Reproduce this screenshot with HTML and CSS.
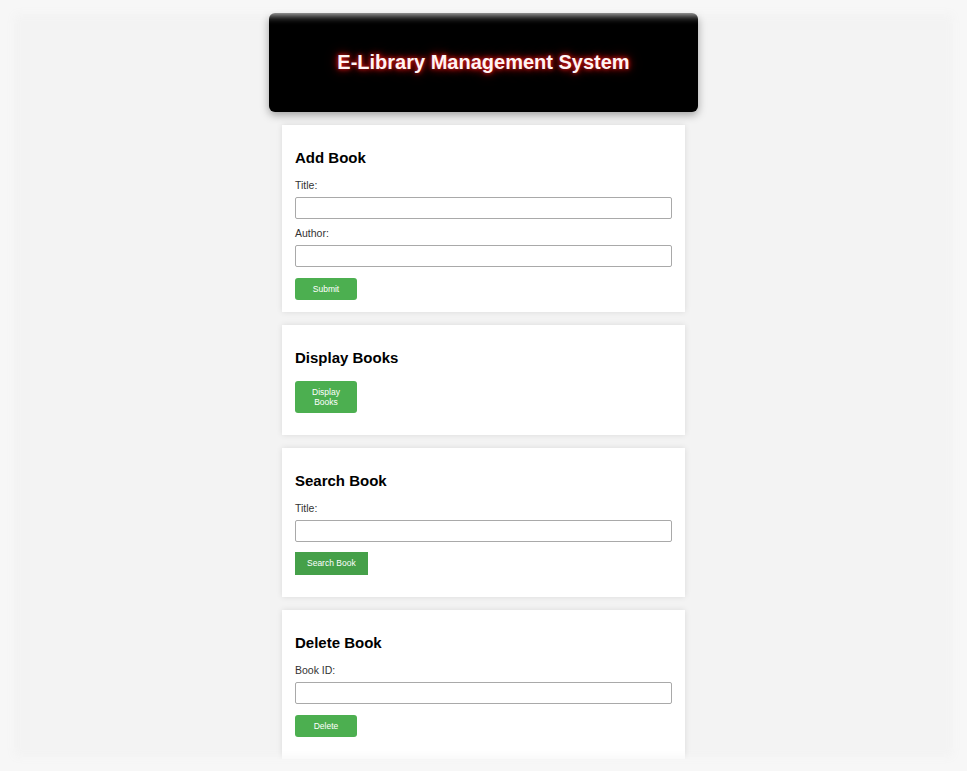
FILE: index.html
```html
<!DOCTYPE html>
<html lang="en">
<head>
<meta charset="utf-8">
<title>E-Library Management System</title>
<link rel="stylesheet" href="styles.css">
</head>
<body>
<div class="page">
  <header class="banner">
    <h1 class="banner-title">E-Library Management System</h1>
  </header>

  <section class="card">
    <h2 class="card-title">Add Book</h2>
    <form class="form">
      <label class="label" for="title">Title:</label>
      <input class="input" id="title" type="text">
      <label class="label label-next" for="author">Author:</label>
      <input class="input" id="author" type="text">
      <button class="btn" type="button">Submit</button>
    </form>
  </section>

  <section class="card">
    <h2 class="card-title">Display Books</h2>
    <button class="btn btn-first" type="button">Display Books</button>
    <div class="results"></div>
  </section>

  <section class="card">
    <h2 class="card-title">Search Book</h2>
    <form class="form">
      <label class="label" for="search">Title:</label>
      <input class="input" id="search" type="text">
      <button class="btn-search" type="button">Search Book</button>
    </form>
    <div class="results"></div>
  </section>

  <section class="card">
    <h2 class="card-title">Delete Book</h2>
    <form class="form">
      <label class="label" for="bookid">Book ID:</label>
      <input class="input" id="bookid" type="text">
      <button class="btn" type="button">Delete</button>
    </form>
    <div class="results"></div>
  </section>
</div>
<div class="vignette"></div>
</body>
</html>
```

FILE: styles.css
```css
* { box-sizing: border-box; }

html, body {
  margin: 0;
  padding: 0;
}

body {
  background: #f3f3f3;
  font-family: "Liberation Sans", Arial, sans-serif;
  color: #222;
  overflow: hidden;
}

.page {
  width: 429px;
  margin: 13px auto 0;
  display: flex;
  flex-direction: column;
  gap: 13px;
}

.banner {
  background: #000;
  height: 99px;
  border-radius: 6px;
  box-shadow: 0 3px 8px rgba(0, 0, 0, 0.35);
  display: flex;
  align-items: center;
  justify-content: center;
}

.banner-title {
  margin: 0;
  font-size: 20px;
  font-weight: bold;
  color: #fff4f4;
  text-shadow: 0 0 4px rgba(255, 30, 30, 0.9), 0 0 9px rgba(200, 0, 0, 0.8), 0 0 14px rgba(150, 0, 0, 0.6);
}

.card {
  margin: 0 13px;
  background: #fff;
  padding: 12px 13px 12px;
  box-shadow: 0 0 6px rgba(0, 0, 0, 0.1);
}

.card-title {
  margin: 12px 0 0;
  font-size: 15px;
  line-height: 18px;
  font-weight: bold;
  color: #000;
}

.form {
  display: flex;
  flex-direction: column;
  align-items: flex-start;
}

.label {
  margin-top: 12px;
  font-size: 10.5px;
  line-height: 12px;
  color: #333;
}

.label-next {
  margin-top: 8px;
}

.input {
  margin-top: 6px;
  width: 100%;
  height: 22px;
  border: 1px solid #a9a9a9;
  border-radius: 2px;
  background: #fff;
  padding: 2px 4px;
}

.btn {
  margin-top: 11px;
  width: 62px;
  padding: 6px 8px;
  font-family: "Liberation Sans", Arial, sans-serif;
  font-size: 8.5px;
  line-height: 10px;
  color: #fff;
  background: #4caf50;
  border: none;
  border-radius: 3px;
  text-align: center;
}

.btn-first {
  margin-top: 14px;
  display: block;
}

.btn-search {
  margin-top: 10px;
  padding: 6px 12px;
  font-family: "Liberation Sans", Arial, sans-serif;
  font-size: 8.5px;
  line-height: 11px;
  color: #fff;
  background: #45a049;
  border: none;
  border-radius: 0;
}

.results {
  margin-top: 10px;
}

.vignette {
  position: fixed;
  inset: 0;
  pointer-events: none;
  box-shadow: inset 0 0 10px 14px #f7f7f7;
}
```
